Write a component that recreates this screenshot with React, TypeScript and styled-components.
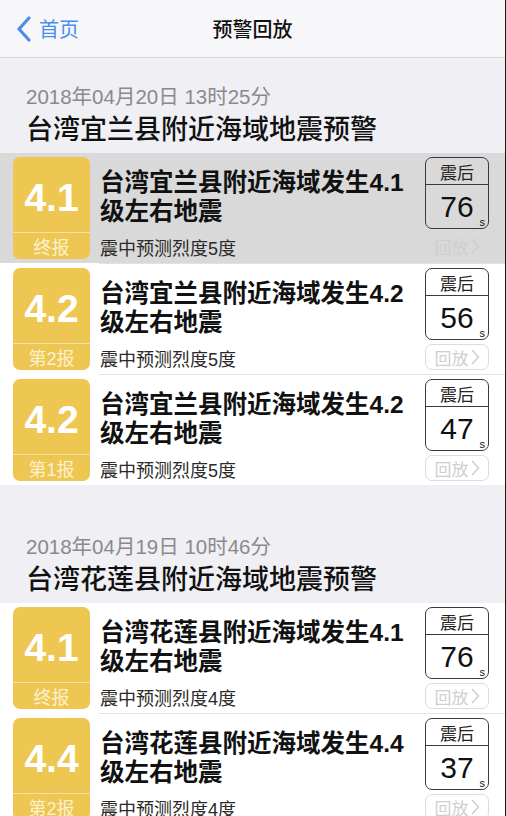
import styled, { createGlobalStyle } from "styled-components";

type Report = {
  magnitude: string;
  stage: string;
  intensity: number;
  seconds: number;
  active?: boolean;
};

type Warning = {
  time: string;
  region: string;
  reports: Report[];
};

const warnings: Warning[] = [
  {
    time: "2018年04月20日 13时25分",
    region: "台湾宜兰县附近海域",
    reports: [
      { magnitude: "4.1", stage: "终报", intensity: 5, seconds: 76, active: true },
      { magnitude: "4.2", stage: "第2报", intensity: 5, seconds: 56 },
      { magnitude: "4.2", stage: "第1报", intensity: 5, seconds: 47 },
    ],
  },
  {
    time: "2018年04月19日 10时46分",
    region: "台湾花莲县附近海域",
    reports: [
      { magnitude: "4.1", stage: "终报", intensity: 4, seconds: 76 },
      { magnitude: "4.4", stage: "第2报", intensity: 4, seconds: 37 },
    ],
  },
];

const GlobalStyle = createGlobalStyle`
  html, body {
    margin: 0;
    padding: 0;
    background: #efeff4;
  }

  body {
    font-family: "Liberation Sans", "Noto Sans CJK SC", sans-serif;
    color: #111;
  }
`;

function BackIcon() {
  return (
    <svg width="16" height="26" viewBox="0 0 16 26">
      <path
        d="M13 2 L3 13 L13 24"
        fill="none"
        stroke="#4a8cf0"
        strokeWidth="3.2"
        strokeLinecap="round"
        strokeLinejoin="round"
      />
    </svg>
  );
}

function Chevron() {
  return (
    <svg width="9" height="16" viewBox="0 0 9 16">
      <path
        d="M1.5 1.5 L7.5 8 L1.5 14.5"
        fill="none"
        stroke="#cfcfcf"
        strokeWidth="1.6"
        strokeLinecap="round"
        strokeLinejoin="round"
      />
    </svg>
  );
}

type ReportRowProps = {
  region: string;
  report: Report;
};

function ReportRow({ region, report }: ReportRowProps) {
  return (
    <Row $active={report.active}>
      <Badge>
        <Magnitude>{report.magnitude}</Magnitude>
        <Stage>{report.stage}</Stage>
      </Badge>

      <Body>
        <Headline>
          {region}发生{report.magnitude}级左右地震
        </Headline>
        <Intensity>震中预测烈度{report.intensity}度</Intensity>
      </Body>

      <Side>
        <Countdown>
          <CountdownLabel>震后</CountdownLabel>
          <CountdownValue>
            {report.seconds}
            <Unit>s</Unit>
          </CountdownValue>
        </Countdown>
        <Replay>
          回放
          <Chevron />
        </Replay>
      </Side>
    </Row>
  );
}

function App() {
  return (
    <Page>
      <GlobalStyle />

      <NavBar>
        <Back>
          <BackIcon />
          <span>首页</span>
        </Back>
        <NavTitle>预警回放</NavTitle>
      </NavBar>

      {warnings.map((warning, index) => (
        <section key={warning.time}>
          <SectionHeader $spaced={index > 0}>
            <Time>{warning.time}</Time>
            <SectionTitle>{warning.region}地震预警</SectionTitle>
          </SectionHeader>

          <List>
            {warning.reports.map((report, i) => (
              <ReportRow key={i} region={warning.region} report={report} />
            ))}
          </List>
        </section>
      ))}
    </Page>
  );
}

const Page = styled.div`
  height: 816px;
  overflow: hidden;
  background: #efeff4;
  border-right: 1px solid #1a1a1a;
  box-sizing: border-box;
`;

const NavBar = styled.header`
  position: relative;
  height: 57px;
  display: flex;
  align-items: center;
  justify-content: center;
  background: #f7f7f9;
  border-bottom: 1px solid #d4d4d8;
`;

const Back = styled.div`
  position: absolute;
  left: 16px;
  top: 0;
  bottom: 0;
  display: flex;
  align-items: center;
  gap: 7px;
  color: #4a8cf0;
  font-family: "Noto Sans CJK SC", sans-serif;
  font-size: 20px;
`;

const NavTitle = styled.h1`
  margin: 0;
  font-family: "Noto Sans CJK SC", sans-serif;
  font-size: 20px;
  font-weight: 500;
  color: #111;
`;

const SectionHeader = styled.div<{ $spaced?: boolean }>`
  padding: ${(p) => (p.$spaced ? "50px" : "27px")} 26px 9px;
`;

const Time = styled.div`
  height: 24px;
  line-height: 24px;
  font-size: 20.5px;
  color: #8a8a8e;
`;

const SectionTitle = styled.h2`
  margin: 3px 0 0;
  height: 32px;
  line-height: 32px;
  font-family: "Noto Sans CJK SC", sans-serif;
  font-size: 27px;
  font-weight: 500;
  color: #111;
`;

const List = styled.div`
  background: #fff;
`;

const Row = styled.div<{ $active?: boolean }>`
  display: flex;
  align-items: stretch;
  height: 110px;
  padding: 4px 16px 4px 13px;
  box-sizing: border-box;
  background: ${(p) => (p.$active ? "#d9d9d9" : "#fff")};

  & + & {
    height: 111px;
    border-top: 1px solid #e2e2e2;
    border-image: linear-gradient(to right, transparent 100px, #e2e2e2 100px) 1;
  }
`;

const Badge = styled.div`
  width: 77px;
  height: 102px;
  flex: none;
  display: flex;
  flex-direction: column;
  border-radius: 7px;
  overflow: hidden;
  background: #eec652;
`;

const Magnitude = styled.div`
  height: 76px;
  display: flex;
  align-items: center;
  justify-content: center;
  padding-top: 6px;
  box-sizing: border-box;
  color: #fff;
  font-size: 39px;
  font-weight: 700;
  border-bottom: 1px solid #f6e2a6;
`;

const Stage = styled.div`
  flex: 1;
  display: flex;
  align-items: center;
  justify-content: center;
  color: #fcf1cf;
  font-size: 18px;
`;

const Body = styled.div`
  flex: 1;
  min-width: 0;
  margin: 0 10px;
  display: flex;
  flex-direction: column;
`;

const Headline = styled.div`
  margin-top: 11px;
  height: 58px;
  line-height: 29px;
  font-size: 24.5px;
  font-weight: 700;
  color: #111;
`;

const Intensity = styled.div`
  margin-top: 12px;
  line-height: 22px;
  font-size: 18px;
  color: #2a2a2a;
`;

const Side = styled.div`
  width: 64px;
  flex: none;
  display: flex;
  flex-direction: column;
  gap: 4px;
`;

const Countdown = styled.div`
  height: 72px;
  box-sizing: border-box;
  border: 1.5px solid #3a3a3a;
  border-radius: 7px;
  display: flex;
  flex-direction: column;
`;

const CountdownLabel = styled.div`
  height: 26px;
  display: flex;
  align-items: center;
  justify-content: center;
  border-bottom: 1.5px solid #3a3a3a;
  font-family: "Noto Sans CJK SC", sans-serif;
  font-size: 17px;
  color: #222;
`;

const CountdownValue = styled.div`
  position: relative;
  flex: 1;
  display: flex;
  align-items: center;
  justify-content: center;
  font-size: 30px;
  color: #111;
`;

const Unit = styled.span`
  position: absolute;
  right: 3px;
  bottom: 0;
  font-size: 11px;
  line-height: 12px;
`;

const Replay = styled.div`
  height: 26px;
  box-sizing: border-box;
  border: 1.5px solid #dcdcdc;
  border-radius: 7px;
  display: flex;
  align-items: center;
  justify-content: center;
  gap: 2px;
  font-family: "Noto Sans CJK SC", sans-serif;
  font-size: 17px;
  color: #cfcfcf;
`;

export default App;
